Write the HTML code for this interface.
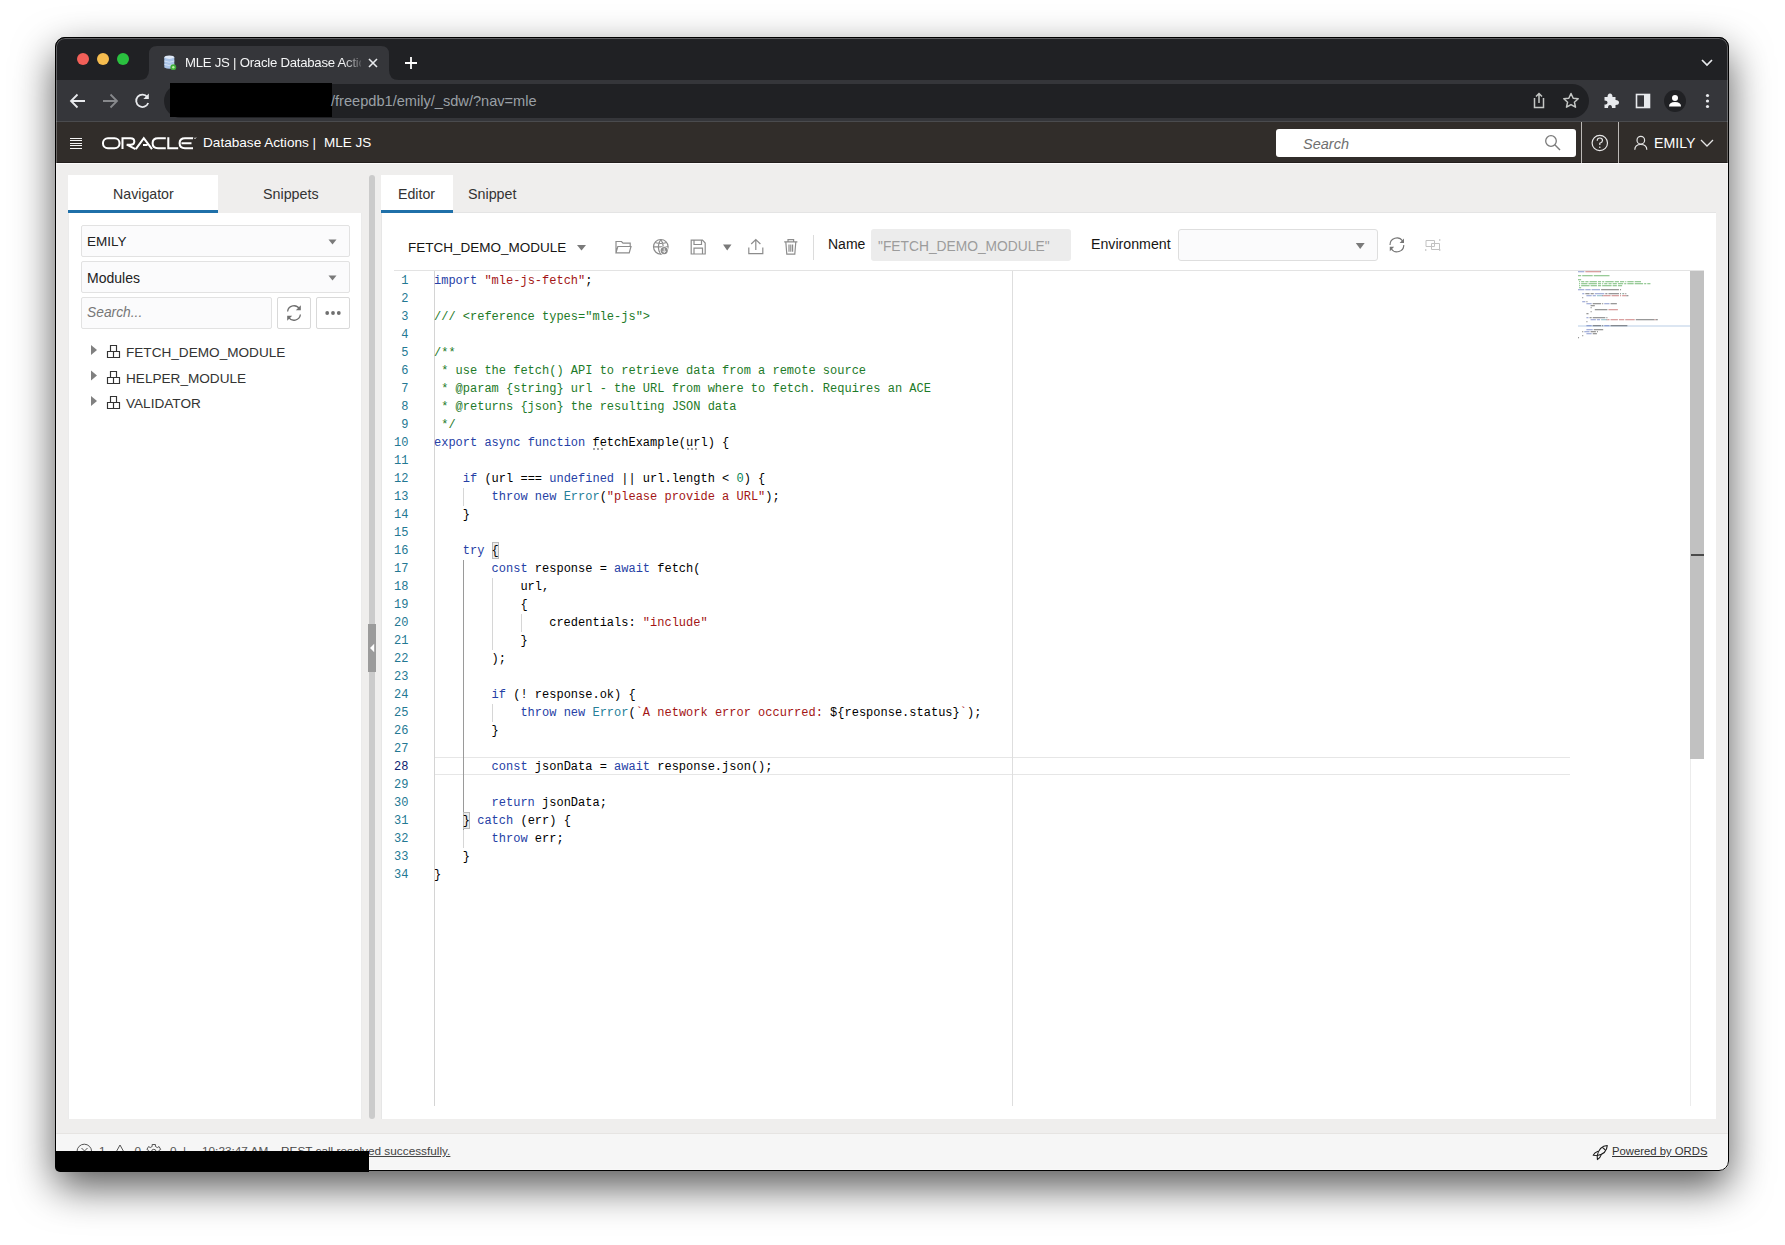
<!DOCTYPE html>
<html><head><meta charset="utf-8">
<style>
*{box-sizing:border-box;margin:0;padding:0}
html,body{width:1785px;height:1245px;overflow:hidden;background:#fff;font-family:"Liberation Sans",sans-serif}
.abs{position:absolute}
#shadow{position:absolute;left:55px;top:37px;width:1674px;height:1134px;border-radius:10px;box-shadow:0 16px 40px rgba(0,0,0,0.66)}
#win{position:absolute;left:55px;top:37px;width:1674px;height:1134px;border-radius:10px;overflow:hidden;background:#efeeed}
#pg{position:absolute;left:-55px;top:-37px;width:1785px;height:1245px}
#winborder{position:absolute;left:55px;top:37px;width:1674px;height:1134px;border-radius:10px;border:1px solid #000;box-shadow:inset 0 0 0 1px rgba(255,255,255,0.28);pointer-events:none}
.code{font-family:"Liberation Mono",monospace;font-size:12px;line-height:18px;white-space:pre;color:#000}
.lnum .act{color:#0b216f}
.k{color:#2540a5}.s{color:#a31515}.c{color:#1d7a28}.t{color:#267f99}.n{color:#098658}
</style></head><body>
<div id="shadow"></div>
<div id="win"><div id="pg">
  <!-- tabstrip -->
  <div class="abs" style="left:55px;top:37px;width:1674px;height:43px;background:#202124"></div>
  <div class="abs" style="left:77px;top:53px;width:12px;height:12px;border-radius:50%;background:#f25f58"></div>
  <div class="abs" style="left:97px;top:53px;width:12px;height:12px;border-radius:50%;background:#f6bd4f"></div>
  <div class="abs" style="left:117px;top:53px;width:12px;height:12px;border-radius:50%;background:#2ac13f"></div>
  <!-- toolbar -->
  <div class="abs" style="left:55px;top:80px;width:1674px;height:42px;background:#35363a"></div>

  <!-- tab -->
  <svg class="abs" style="left:0;top:0" width="1785" height="125">
    <path d="M139 80 Q149 80 149 70 L149 54 Q149 46 157 46 L381 46 Q389 46 389 54 L389 70 Q389 80 399 80 Z" fill="#35363a"/>
    <!-- favicon -->
    <ellipse cx="169.3" cy="57.5" rx="5" ry="2" fill="#dfe9f7"/>
    <path d="M164.3 57.5 L164.3 67.5 Q169.3 70.2 174.3 67.5 L174.3 57.5 Q169.3 60.3 164.3 57.5Z" fill="#aac4e8"/>
    <path d="M164.3 61 Q169.3 63.5 174.3 61 M164.3 64.3 Q169.3 66.8 174.3 64.3" stroke="#dce8f8" stroke-width="0.8" fill="none"/>
    <circle cx="173.3" cy="67.2" r="2.9" fill="#3fae3a"/>
    <circle cx="173.3" cy="67.2" r="1.2" fill="#b8f0a0"/>
    <!-- close x -->
    <path d="M369 59 L377 67 M377 59 L369 67" stroke="#e8eaed" stroke-width="1.6"/>
    <!-- plus -->
    <path d="M405 63 L417 63 M411 57 L411 69" stroke="#fff" stroke-width="1.8"/>
    <!-- tab strip chevron -->
    <path d="M1702 60 L1707 65 L1712 60" stroke="#e8eaed" stroke-width="1.7" fill="none"/>
    <!-- back -->
    <path d="M71 101 L85 101 M77.5 94.5 L71 101 L77.5 107.5" stroke="#e8eaed" stroke-width="1.8" fill="none"/>
    <!-- forward -->
    <path d="M103 101 L117 101 M110.5 94.5 L117 101 L110.5 107.5" stroke="#87898c" stroke-width="1.8" fill="none"/>
    <!-- reload -->
    <path d="M147.3 97 A6.2 6.2 0 1 0 148.2 103" stroke="#e8eaed" stroke-width="1.8" fill="none"/>
    <path d="M148.8 93.5 L148.8 99 L143.3 99 Z" fill="#e8eaed"/>
    <!-- address bar -->
    <rect x="164" y="84" width="1425" height="34" rx="17" fill="#202124"/>
    <rect x="170" y="83" width="162" height="34" fill="#000"/>
    <!-- share -->
    <path d="M1534.5 98 L1534.5 107.5 L1543.5 107.5 L1543.5 98" stroke="#c4c7c5" stroke-width="1.5" fill="none"/>
    <path d="M1539 103 L1539 94 M1536 96.5 L1539 93.5 L1542 96.5" stroke="#c4c7c5" stroke-width="1.5" fill="none"/>
    <!-- star -->
    <path d="M1571 93.5 L1573.2 98.3 L1578.2 98.8 L1574.4 102.2 L1575.5 107.2 L1571 104.6 L1566.5 107.2 L1567.6 102.2 L1563.8 98.8 L1568.8 98.3 Z" stroke="#c4c7c5" stroke-width="1.5" fill="none" stroke-linejoin="round"/>
    <!-- puzzle -->
    <path d="M1604.5 97 L1607.5 97 Q1607.5 93.5 1610 93.5 Q1612.5 93.5 1612.5 97 L1615.5 97 L1615.5 100 Q1619 100 1619 102.5 Q1619 105 1615.5 105 L1615.5 108 L1612 108 Q1612 105 1610 105 Q1608 105 1608 108 L1604.5 108 L1604.5 104.5 Q1607.5 104.5 1607.5 102.5 Q1607.5 100.5 1604.5 100.5 Z" fill="#e8eaed"/>
    <!-- sidebar -->
    <rect x="1636.5" y="94.5" width="13" height="13" fill="none" stroke="#e8eaed" stroke-width="1.6"/>
    <rect x="1644" y="94" width="6" height="14" fill="#e8eaed"/>
    <!-- avatar -->
    <circle cx="1675" cy="101" r="11" fill="#202124"/>
    <circle cx="1675" cy="98" r="3" fill="#fff"/>
    <path d="M1669 106.5 Q1669 102 1675 102 Q1681 102 1681 106.5 Z" fill="#fff"/>
    <!-- kebab -->
    <circle cx="1707.5" cy="95.5" r="1.6" fill="#e8eaed"/>
    <circle cx="1707.5" cy="101" r="1.6" fill="#e8eaed"/>
    <circle cx="1707.5" cy="106.5" r="1.6" fill="#e8eaed"/>
  </svg>
  <div class="abs" style="left:185px;top:54px;width:176px;height:18px;overflow:hidden;white-space:nowrap;font-size:13.2px;letter-spacing:-0.25px;color:#f4f5f6;line-height:18px;-webkit-mask-image:linear-gradient(to right,#000 158px,transparent 180px)">MLE JS | Oracle Database Actions</div>
  <div class="abs" style="left:331px;top:92px;font-size:14.6px;color:#9aa0a6;line-height:18px;white-space:nowrap">/freepdb1/emily/_sdw/?nav=mle</div>
  <!-- header -->
  <div class="abs" style="left:55px;top:122px;width:1674px;height:41px;background:#312d2a"></div>

  <div class="abs" style="left:55px;top:121px;width:1674px;height:1px;background:#4a4b4e"></div>
  <div class="abs" style="left:55px;top:162px;width:1674px;height:1px;background:#221e1c"></div>
  <div class="abs" style="left:55px;top:163px;width:1674px;height:1px;background:#fbfafa"></div>
  <svg class="abs" style="left:0;top:0" width="1785" height="170">
    <path d="M70 138.5 H82 M70 140.5 H82 M70 143.5 H82 M70 145.5 H82 M70 148.5 H82" stroke="#f4f4f4" stroke-width="1"/>
    <g transform="translate(102,137.3)" stroke="#fff" stroke-width="2.05" fill="none">
      <rect x="0.95" y="0.95" width="16.6" height="9.9" rx="4.95"/>
      <path d="M20.5 11.8 V0.95 H28.5 Q32.3 0.95 32.3 4.2 Q32.3 7.4 28.5 7.4 H24.8 L33.5 11.8"/>
      <path d="M33.8 11.8 L41.8 0.95 L50 11.8 M41 7.6 H45.5"/>
      <path d="M63.8 0.95 H56 Q50.6 0.95 50.6 5.9 Q50.6 10.85 56 10.85 H63.8"/>
      <path d="M66.3 0 V10.85 H76.2"/>
      <path d="M91 0.95 H83 Q77.6 0.95 77.6 5.9 Q77.6 10.85 83 10.85 H91 M79.5 5.9 H89.5"/>
    </g>
    <path d="M194 137.5 L195 139 L196.2 137.2" stroke="#ddd" stroke-width="0.7" fill="none"/>
    <path d="M1576 128 h0" />
  </svg>
  <div class="abs" style="left:203px;top:134px;font-size:13.6px;color:#fff;line-height:18px;white-space:nowrap">Database Actions |</div>
  <div class="abs" style="left:324px;top:134px;font-size:13.5px;color:#fff;line-height:18px;white-space:nowrap">MLE JS</div>
  <!-- search -->
  <div class="abs" style="left:1276px;top:129px;width:300px;height:28px;background:#fff;border-radius:3px"></div>
  <div class="abs" style="left:1303px;top:135px;font-size:14.5px;color:#6f6f6f;font-style:italic;line-height:18px">Search</div>
  <div class="abs" style="left:1581px;top:122px;width:1px;height:41px;background:#bcb9b6"></div>
  <div class="abs" style="left:1618px;top:122px;width:1px;height:41px;background:#bcb9b6"></div>
  <svg class="abs" style="left:0;top:0" width="1785" height="170">
    <circle cx="1551" cy="141" r="5.3" stroke="#7a7a7a" stroke-width="1.3" fill="none"/>
    <path d="M1554.8 144.8 L1560 150" stroke="#7a7a7a" stroke-width="1.4"/>
    <circle cx="1599.8" cy="143" r="7.7" stroke="#e6e6e6" stroke-width="1.2" fill="none"/>
    <path d="M1597.2 140.8 Q1597.2 138 1599.8 138 Q1602.5 138 1602.5 140.6 Q1602.5 142.4 1599.8 143.3 V145" stroke="#e6e6e6" stroke-width="1.2" fill="none"/>
    <circle cx="1599.8" cy="147.3" r="0.8" fill="#e6e6e6"/>
    <circle cx="1640.8" cy="140.2" r="3.8" stroke="#e6e6e6" stroke-width="1.2" fill="none"/>
    <path d="M1634.8 149.8 Q1634.8 144.5 1640.8 144.5 Q1646.8 144.5 1646.8 149.8" stroke="#e6e6e6" stroke-width="1.2" fill="none"/>
    <path d="M1701 140 L1707 146 L1713 140" stroke="#e6e6e6" stroke-width="1.3" fill="none"/>
  </svg>
  <div class="abs" style="left:1654px;top:134px;font-size:14.2px;color:#fff;line-height:18px">EMILY</div>

  <!-- LEFT PANEL -->
  <div class="abs" style="left:68px;top:175px;width:150px;height:38px;background:#fff"></div>
  <div class="abs" style="left:68px;top:210px;width:150px;height:3px;background:#1f70a9"></div>
  <div class="abs" style="left:113px;top:185px;font-size:14.2px;color:#333;line-height:18px">Navigator</div>
  <div class="abs" style="left:263px;top:185px;font-size:14.3px;color:#333;line-height:18px">Snippets</div>
  <div class="abs" style="left:68px;top:213px;width:294px;height:906px;background:#fff;border-left:1px solid #ebebeb;border-right:1px solid #ebebeb"></div>
  <div class="abs" style="left:81px;top:225px;width:269px;height:32px;background:#fbfbfc;border:1px solid #e2e2e2;border-radius:2px"></div>
  <div class="abs" style="left:87px;top:233px;font-size:13.5px;color:#222;line-height:18px">EMILY</div>
  <div class="abs" style="left:81px;top:261px;width:269px;height:32px;background:#fbfbfc;border:1px solid #e2e2e2;border-radius:2px"></div>
  <div class="abs" style="left:87px;top:269px;font-size:14px;color:#222;line-height:18px">Modules</div>
  <div class="abs" style="left:81px;top:297px;width:191px;height:32px;background:#fbfbfc;border:1px solid #e2e2e2;border-radius:2px"></div>
  <div class="abs" style="left:87px;top:304px;font-size:13.8px;color:#777;font-style:italic;line-height:18px">Search...</div>
  <div class="abs" style="left:277px;top:297px;width:34px;height:32px;background:#fff;border:1px solid #d9d9d9;border-radius:2px"></div>
  <div class="abs" style="left:316px;top:297px;width:34px;height:32px;background:#fff;border:1px solid #d9d9d9;border-radius:2px"></div>
  <svg class="abs" style="left:0;top:0" width="1785" height="420">
    <path d="M328.5 239.5 L336.5 239.5 L332.5 244.5 Z" fill="#7a7a7a"/>
    <path d="M328.5 275.5 L336.5 275.5 L332.5 280.5 Z" fill="#7a7a7a"/>
    <!-- refresh -->
    <path d="M287.6 311.5 A6.4 6.4 0 0 1 299.5 309" stroke="#707070" stroke-width="1.3" fill="none"/>
    <path d="M300.4 314.5 A6.4 6.4 0 0 1 288.5 317" stroke="#707070" stroke-width="1.3" fill="none"/>
    <path d="M300.8 305.2 L300.8 310.2 L295.8 310.2 Z" fill="#707070"/>
    <path d="M287.2 320.8 L287.2 315.8 L292.2 315.8 Z" fill="#707070"/>
    <circle cx="327.2" cy="313" r="1.9" fill="#6f6f6f"/>
    <circle cx="333" cy="313" r="1.9" fill="#6f6f6f"/>
    <circle cx="338.8" cy="313" r="1.9" fill="#6f6f6f"/>
    <!-- tree -->
    <g fill="#808080">
      <path d="M91 345 L97 350 L91 355 Z"/>
      <path d="M91 370.5 L97 375.5 L91 380.5 Z"/>
      <path d="M91 396 L97 401 L91 406 Z"/>
    </g>
    <g stroke="#333" stroke-width="1.15" fill="none">
      <path d="M110.5 351.5 V345.5 H116.5 V351.5 M107.5 351.5 H119.5 V357.5 H107.5 Z M113.5 351.5 V357.5"/>
      <path d="M110.5 377.5 V371.5 H116.5 V377.5 M107.5 377.5 H119.5 V383.5 H107.5 Z M113.5 377.5 V383.5"/>
      <path d="M110.5 402.5 V396.5 H116.5 V402.5 M107.5 402.5 H119.5 V408.5 H107.5 Z M113.5 402.5 V408.5"/>
    </g>
  </svg>
  <div class="abs" style="left:126px;top:344px;font-size:13.6px;color:#333;line-height:18px">FETCH_DEMO_MODULE</div>
  <div class="abs" style="left:126px;top:369.5px;font-size:13.6px;color:#333;line-height:18px">HELPER_MODULE</div>
  <div class="abs" style="left:126px;top:395px;font-size:13.6px;color:#333;line-height:18px">VALIDATOR</div>
  <!-- splitter -->
  <div class="abs" style="left:369px;top:175px;width:6px;height:944px;background:#cbcbcb;border-radius:3px"></div>
  <div class="abs" style="left:368px;top:624px;width:8px;height:48px;background:#9b9b9b"></div>
  <svg class="abs" style="left:0;top:0" width="400" height="700"><path d="M370 648 L374.2 643.8 L374.2 652.2 Z" fill="#fff"/></svg>
  <!-- RIGHT PANEL -->
  <div class="abs" style="left:381px;top:175px;width:72px;height:38px;background:#fff"></div>
  <div class="abs" style="left:381px;top:210px;width:72px;height:3px;background:#1f70a9"></div>
  <div class="abs" style="left:398px;top:185px;font-size:14.2px;color:#333;line-height:18px">Editor</div>
  <div class="abs" style="left:468px;top:185px;font-size:14.3px;color:#333;line-height:18px">Snippet</div>
  <div class="abs" style="left:453px;top:212px;width:1263px;height:1px;background:#e4e4e4"></div>
  <div class="abs" style="left:381px;top:213px;width:1335px;height:906px;background:#fff;border-left:1px solid #e6e6e6"></div>
  <div class="abs" style="left:408px;top:239px;font-size:13.5px;color:#161513;line-height:18px">FETCH_DEMO_MODULE</div>
  <div class="abs" style="left:828px;top:235px;font-size:14px;color:#161513;line-height:18px">Name</div>
  <div class="abs" style="left:871px;top:229px;width:200px;height:32px;background:#ececec;border-radius:3px"></div>
  <div class="abs" style="left:878px;top:237.5px;font-size:13.8px;color:#9c9c9c;line-height:18px">"FETCH_DEMO_MODULE"</div>
  <div class="abs" style="left:1091px;top:235px;font-size:14.2px;color:#161513;line-height:18px">Environment</div>
  <div class="abs" style="left:1178px;top:229px;width:200px;height:32px;background:#fbfbfc;border:1px solid #dedede;border-radius:3px"></div>
  <div class="abs" style="left:813px;top:235px;width:1px;height:25px;background:#dcdcdc"></div>
  <svg class="abs" style="left:0;top:0" width="1785" height="270">
    <path d="M577 245 L586 245 L581.5 250.5 Z" fill="#7a7a7a"/>
    <path d="M723 244.5 L731.5 244.5 L727.2 250.5 Z" fill="#7a7a7a"/>
    <path d="M1355.8 243 L1364.7 243 L1360.2 249 Z" fill="#7a7a7a"/>
    <g stroke="#8c8c8c" stroke-width="1.2" fill="none">
      <!-- folder -->
      <path d="M616 252.8 V241.5 H621.5 L623 243.2 H630.2 V246.5 M616 252.8 L617.8 246.5 H631 L629.2 252.8 Z"/>
      <!-- globe -->
      <circle cx="660.8" cy="246.8" r="7.3"/>
      <path d="M653.5 246.8 H668.1 M660.8 239.5 Q655.8 246.8 660.8 254.1 M660.8 239.5 Q665.8 246.8 660.8 254.1 M655 242.5 Q660.8 244.5 666.6 242.5"/>
      <!-- save -->
      <path d="M691.2 240.2 H702.5 L705.2 243 V254 H691.2 Z M694 240.2 V244.5 H701.5 V240.2 M694 254 V248.2 H702.5 V254"/>
      <!-- upload -->
      <path d="M748.8 247.5 V253.6 H762.8 V247.5 M755.8 250 V239.5 M751.2 244 L755.8 239.5 L760.4 244"/>
      <!-- trash -->
      <path d="M784.2 241.8 H797.4 M788 241.8 V239.6 H793.6 V241.8 M785.8 241.8 L786.8 254.2 H794.8 L795.8 241.8 M789 244.5 V251.8 M790.8 244.5 V251.8 M792.6 244.5 V251.8"/>
      <!-- refresh env -->
      <path d="M1390 244.9 A6.9 6.9 0 0 1 1402.6 241 M1403.8 244.9 A6.9 6.9 0 0 1 1391.2 248.8" stroke="#767676" stroke-width="1.15"/>
    </g>
    <circle cx="664.2" cy="250.6" r="4.4" fill="#fff"/><circle cx="664.2" cy="250.6" r="3.6" fill="#8c8c8c"/>
    <path d="M664.2 248.2 V252.4 M662.4 250.8 L664.2 252.6 L666 250.8" stroke="#fff" stroke-width="0.9" fill="none"/>
    <path d="M1404 238.6 V243 H1399.6 Z M1389.8 251.2 V246.8 H1394.2 Z" fill="#767676"/>
    <g stroke="#c2c2c2" stroke-width="1" fill="none">
      <path d="M1426 240.5 H1434.5 V246.5 H1426 Z M1431.5 243.5 H1439.5 V249.5 H1431.5 Z"/>
      <path d="M1439 240 h1.4 M1425 250 h1.4 M1439 250 h1.4" stroke-width="1.4"/>
    </g>
  </svg>

  <!-- EDITOR -->
  <div class="abs" style="left:394px;top:270px;width:1310px;height:1px;background:#e3e3e3"></div>
  <div class="abs" style="left:434px;top:757px;width:1136px;height:18px;border-top:1px solid #e6e6e6;border-bottom:1px solid #e6e6e6"></div>
  <div class="abs" style="left:434px;top:271px;width:1px;height:835px;background:#d4d4d4"></div>
  <div class="abs" style="left:1012px;top:271px;width:1px;height:835px;background:#dedede"></div>
  <!-- indent guides -->
  <div class="abs" style="left:463px;top:488px;width:1px;height:18px;background:#d6d6d6"></div>
  <div class="abs" style="left:463px;top:560px;width:1px;height:288px;background:#9a9a9a"></div>
  <div class="abs" style="left:492px;top:578px;width:1px;height:72px;background:#d6d6d6"></div>
  <div class="abs" style="left:521px;top:614px;width:1px;height:18px;background:#d6d6d6"></div>
  <div class="abs" style="left:492px;top:704px;width:1px;height:18px;background:#d6d6d6"></div>
  <div class="abs" style="left:463px;top:830px;width:1px;height:18px;background:#d6d6d6"></div>
  <!-- bracket match -->
  <div class="abs" style="left:492px;top:542px;width:7px;height:17px;background:#ececec;border:1px solid #b9b9b9"></div>
  <div class="abs" style="left:463px;top:812px;width:7px;height:17px;background:#ececec;border:1px solid #b9b9b9"></div>
  <div class="abs code lnum" style="left:380.5px;top:272px;width:28px;text-align:right;color:#237893"><div>1</div><div>2</div><div>3</div><div>4</div><div>5</div><div>6</div><div>7</div><div>8</div><div>9</div><div>10</div><div>11</div><div>12</div><div>13</div><div>14</div><div>15</div><div>16</div><div>17</div><div>18</div><div>19</div><div>20</div><div>21</div><div>22</div><div>23</div><div>24</div><div>25</div><div>26</div><div>27</div><div class=act>28</div><div>29</div><div>30</div><div>31</div><div>32</div><div>33</div><div>34</div></div>
  <div class="abs code" style="left:434px;top:272px"><div><span class="k">import</span> <span class="s">"mle-js-fetch"</span>;</div><div>&#8203;</div><div><span class="c">/// &lt;reference types="mle-js"&gt;</span></div><div>&#8203;</div><div><span class="c">/**</span></div><div><span class="c"> * use the fetch() API to retrieve data from a remote source</span></div><div><span class="c"> * @param {string} url - the URL from where to fetch. Requires an ACE</span></div><div><span class="c"> * @returns {json} the resulting JSON data</span></div><div><span class="c"> */</span></div><div><span class="k">export</span> <span class="k">async</span> <span class="k">function</span> fetchExample(url) {</div><div>&#8203;</div><div>    <span class="k">if</span> (url === <span class="k">undefined</span> || url.length &lt; <span class="n">0</span>) {</div><div>        <span class="k">throw</span> <span class="k">new</span> <span class="t">Error</span>(<span class="s">"please provide a URL"</span>);</div><div>    }</div><div>&#8203;</div><div>    <span class="k">try</span> {</div><div>        <span class="k">const</span> response = <span class="k">await</span> fetch(</div><div>            url,</div><div>            {</div><div>                credentials: <span class="s">"include"</span></div><div>            }</div><div>        );</div><div>&#8203;</div><div>        <span class="k">if</span> (! response.ok) {</div><div>            <span class="k">throw</span> <span class="k">new</span> <span class="t">Error</span>(<span class="s">`A network error occurred: </span>${response.status}<span class="s">`</span>);</div><div>        }</div><div>&#8203;</div><div>        <span class="k">const</span> jsonData = <span class="k">await</span> response.json();</div><div>&#8203;</div><div>        <span class="k">return</span> jsonData;</div><div>    } <span class="k">catch</span> (err) {</div><div>        <span class="k">throw</span> err;</div><div>    }</div><div>}</div></div>
  <!-- hint dots -->
  <svg class="abs" style="left:0;top:0" width="1785" height="460">
    <path d="M593.2 449 h1.6 M597.2 449 h1.6 M601.2 449 h1.6 M687.2 449 h1.6 M691.2 449 h1.6 M695.2 449 h1.6" stroke="#666" stroke-width="1.5"/>
  </svg>
  <!-- scrollbar -->
  <div class="abs" style="left:1690px;top:271px;width:1px;height:835px;background:#ececec"></div>
  <div class="abs" style="left:1690px;top:271px;width:14px;height:488px;background:#c1c1c1"></div>
  <div class="abs" style="left:1691px;top:554px;width:13px;height:2px;background:#4b4b4b"></div>

  <!-- minimap -->
<svg class="abs" style="left:0;top:0" width="1785" height="360">
<rect x="1578" y="325" width="112" height="2" fill="#dce6f2"/>
<g opacity="0.4"><rect x="1578.00" y="271" width="6.30" height="1.3" fill="#2540a5"/><rect x="1585.35" y="271" width="14.70" height="1.3" fill="#a31515"/><rect x="1600.05" y="271" width="1.05" height="1.3" fill="#000000"/><rect x="1578.00" y="275" width="3.15" height="1.3" fill="#008000"/><rect x="1582.20" y="275" width="10.50" height="1.3" fill="#008000"/><rect x="1593.75" y="275" width="15.75" height="1.3" fill="#008000"/><rect x="1578.00" y="279" width="3.15" height="1.3" fill="#008000"/><rect x="1579.05" y="281" width="1.05" height="1.3" fill="#008000"/><rect x="1581.15" y="281" width="3.15" height="1.3" fill="#008000"/><rect x="1585.35" y="281" width="3.15" height="1.3" fill="#008000"/><rect x="1589.55" y="281" width="7.35" height="1.3" fill="#008000"/><rect x="1597.95" y="281" width="3.15" height="1.3" fill="#008000"/><rect x="1602.15" y="281" width="2.10" height="1.3" fill="#008000"/><rect x="1605.30" y="281" width="8.40" height="1.3" fill="#008000"/><rect x="1614.75" y="281" width="4.20" height="1.3" fill="#008000"/><rect x="1620.00" y="281" width="4.20" height="1.3" fill="#008000"/><rect x="1625.25" y="281" width="1.05" height="1.3" fill="#008000"/><rect x="1627.35" y="281" width="6.30" height="1.3" fill="#008000"/><rect x="1634.70" y="281" width="6.30" height="1.3" fill="#008000"/><rect x="1579.05" y="283" width="1.05" height="1.3" fill="#008000"/><rect x="1581.15" y="283" width="6.30" height="1.3" fill="#008000"/><rect x="1588.50" y="283" width="8.40" height="1.3" fill="#008000"/><rect x="1597.95" y="283" width="3.15" height="1.3" fill="#008000"/><rect x="1602.15" y="283" width="1.05" height="1.3" fill="#008000"/><rect x="1604.25" y="283" width="3.15" height="1.3" fill="#008000"/><rect x="1608.45" y="283" width="3.15" height="1.3" fill="#008000"/><rect x="1612.65" y="283" width="4.20" height="1.3" fill="#008000"/><rect x="1617.90" y="283" width="5.25" height="1.3" fill="#008000"/><rect x="1624.20" y="283" width="2.10" height="1.3" fill="#008000"/><rect x="1627.35" y="283" width="6.30" height="1.3" fill="#008000"/><rect x="1634.70" y="283" width="8.40" height="1.3" fill="#008000"/><rect x="1644.15" y="283" width="2.10" height="1.3" fill="#008000"/><rect x="1647.30" y="283" width="3.15" height="1.3" fill="#008000"/><rect x="1579.05" y="285" width="1.05" height="1.3" fill="#008000"/><rect x="1581.15" y="285" width="8.40" height="1.3" fill="#008000"/><rect x="1590.60" y="285" width="6.30" height="1.3" fill="#008000"/><rect x="1597.95" y="285" width="3.15" height="1.3" fill="#008000"/><rect x="1602.15" y="285" width="9.45" height="1.3" fill="#008000"/><rect x="1612.65" y="285" width="4.20" height="1.3" fill="#008000"/><rect x="1617.90" y="285" width="4.20" height="1.3" fill="#008000"/><rect x="1579.05" y="287" width="2.10" height="1.3" fill="#008000"/><rect x="1578.00" y="289" width="6.30" height="1.3" fill="#2540a5"/><rect x="1585.35" y="289" width="5.25" height="1.3" fill="#2540a5"/><rect x="1591.65" y="289" width="8.40" height="1.3" fill="#2540a5"/><rect x="1601.10" y="289" width="17.85" height="1.3" fill="#000000"/><rect x="1620.00" y="289" width="1.05" height="1.3" fill="#000000"/><rect x="1582.20" y="293" width="2.10" height="1.3" fill="#2540a5"/><rect x="1585.35" y="293" width="4.20" height="1.3" fill="#000000"/><rect x="1590.60" y="293" width="3.15" height="1.3" fill="#000000"/><rect x="1594.80" y="293" width="9.45" height="1.3" fill="#2540a5"/><rect x="1605.30" y="293" width="2.10" height="1.3" fill="#000000"/><rect x="1608.45" y="293" width="10.50" height="1.3" fill="#000000"/><rect x="1620.00" y="293" width="1.05" height="1.3" fill="#000000"/><rect x="1622.10" y="293" width="1.05" height="1.3" fill="#098658"/><rect x="1623.15" y="293" width="1.05" height="1.3" fill="#000000"/><rect x="1625.25" y="293" width="1.05" height="1.3" fill="#000000"/><rect x="1586.40" y="295" width="5.25" height="1.3" fill="#2540a5"/><rect x="1592.70" y="295" width="3.15" height="1.3" fill="#2540a5"/><rect x="1596.90" y="295" width="5.25" height="1.3" fill="#267f99"/><rect x="1602.15" y="295" width="1.05" height="1.3" fill="#000000"/><rect x="1603.20" y="295" width="7.35" height="1.3" fill="#a31515"/><rect x="1611.60" y="295" width="7.35" height="1.3" fill="#a31515"/><rect x="1620.00" y="295" width="1.05" height="1.3" fill="#a31515"/><rect x="1622.10" y="295" width="4.20" height="1.3" fill="#a31515"/><rect x="1626.30" y="295" width="2.10" height="1.3" fill="#000000"/><rect x="1582.20" y="297" width="1.05" height="1.3" fill="#000000"/><rect x="1582.20" y="301" width="3.15" height="1.3" fill="#2540a5"/><rect x="1586.40" y="301" width="1.05" height="1.3" fill="#000000"/><rect x="1586.40" y="303" width="5.25" height="1.3" fill="#2540a5"/><rect x="1592.70" y="303" width="8.40" height="1.3" fill="#000000"/><rect x="1602.15" y="303" width="1.05" height="1.3" fill="#000000"/><rect x="1604.25" y="303" width="5.25" height="1.3" fill="#2540a5"/><rect x="1610.55" y="303" width="6.30" height="1.3" fill="#000000"/><rect x="1590.60" y="305" width="4.20" height="1.3" fill="#000000"/><rect x="1590.60" y="307" width="1.05" height="1.3" fill="#000000"/><rect x="1594.80" y="309" width="12.60" height="1.3" fill="#000000"/><rect x="1608.45" y="309" width="9.45" height="1.3" fill="#a31515"/><rect x="1590.60" y="311" width="1.05" height="1.3" fill="#000000"/><rect x="1586.40" y="313" width="2.10" height="1.3" fill="#000000"/><rect x="1586.40" y="317" width="2.10" height="1.3" fill="#2540a5"/><rect x="1589.55" y="317" width="2.10" height="1.3" fill="#000000"/><rect x="1592.70" y="317" width="12.60" height="1.3" fill="#000000"/><rect x="1606.35" y="317" width="1.05" height="1.3" fill="#000000"/><rect x="1590.60" y="319" width="5.25" height="1.3" fill="#2540a5"/><rect x="1596.90" y="319" width="3.15" height="1.3" fill="#2540a5"/><rect x="1601.10" y="319" width="5.25" height="1.3" fill="#267f99"/><rect x="1606.35" y="319" width="1.05" height="1.3" fill="#000000"/><rect x="1607.40" y="319" width="2.10" height="1.3" fill="#a31515"/><rect x="1610.55" y="319" width="7.35" height="1.3" fill="#a31515"/><rect x="1618.95" y="319" width="5.25" height="1.3" fill="#a31515"/><rect x="1625.25" y="319" width="9.45" height="1.3" fill="#a31515"/><rect x="1635.75" y="319" width="18.90" height="1.3" fill="#000000"/><rect x="1654.65" y="319" width="1.05" height="1.3" fill="#a31515"/><rect x="1655.70" y="319" width="2.10" height="1.3" fill="#000000"/><rect x="1586.40" y="321" width="1.05" height="1.3" fill="#000000"/><rect x="1586.40" y="325" width="5.25" height="1.3" fill="#2540a5"/><rect x="1592.70" y="325" width="8.40" height="1.3" fill="#000000"/><rect x="1602.15" y="325" width="1.05" height="1.3" fill="#000000"/><rect x="1604.25" y="325" width="5.25" height="1.3" fill="#2540a5"/><rect x="1610.55" y="325" width="16.80" height="1.3" fill="#000000"/><rect x="1586.40" y="329" width="6.30" height="1.3" fill="#2540a5"/><rect x="1593.75" y="329" width="9.45" height="1.3" fill="#000000"/><rect x="1582.20" y="331" width="1.05" height="1.3" fill="#000000"/><rect x="1584.30" y="331" width="5.25" height="1.3" fill="#2540a5"/><rect x="1590.60" y="331" width="5.25" height="1.3" fill="#000000"/><rect x="1596.90" y="331" width="1.05" height="1.3" fill="#000000"/><rect x="1586.40" y="333" width="5.25" height="1.3" fill="#2540a5"/><rect x="1592.70" y="333" width="4.20" height="1.3" fill="#000000"/><rect x="1582.20" y="335" width="1.05" height="1.3" fill="#000000"/><rect x="1578.00" y="337" width="1.05" height="1.3" fill="#000000"/></g></svg>
  <!-- status -->
  <div class="abs" style="left:55px;top:1133px;width:1674px;height:38px;background:#f6f6f6"></div>
  <div class="abs" style="left:55px;top:1133px;width:1674px;height:1px;background:#e6e4e2"></div>
  <svg class="abs" style="left:0;top:0" width="1785" height="1245">
    <g stroke="#555" stroke-width="1" fill="none">
      <circle cx="84.3" cy="1151.5" r="7.3"/>
      <path d="M81.5 1148 L87.5 1154 M87.5 1148 L81.5 1154"/>
      <path d="M120 1145 L125 1154 L115 1154 Z"/>
      <path d="M152.20 1146.45 L152.12 1144.50 L155.48 1144.50 L155.40 1146.45 L157.38 1147.59 L159.02 1146.54 L160.70 1149.46 L158.98 1150.36 L158.98 1152.64 L160.70 1153.54 L159.02 1156.46 L157.38 1155.41 L155.40 1156.55 L155.48 1158.50 L152.12 1158.50 L152.20 1156.55 L150.22 1155.41 L148.58 1156.46 L146.90 1153.54 L148.62 1152.64 L148.62 1150.36 L146.90 1149.46 L148.58 1146.54 L150.22 1147.59 Z"/><circle cx="153.8" cy="1151.5" r="2.2"/>
    </g>
    <!-- rocket -->
    <g stroke="#1a1a1a" stroke-width="1.05" fill="none" stroke-linejoin="round">
      <path d="M1607.3 1145.4 Q1599.3 1145.8 1597.2 1155.6 Q1606.8 1153.8 1607.3 1145.4 Z"/>
      <path d="M1602.4 1147.4 L1605.4 1150"/>
      <path d="M1598 1151.3 Q1594.5 1152.5 1593.2 1155.3 L1596.9 1155.4"/>
      <path d="M1601.3 1154.6 Q1600.2 1158 1597.4 1159.6 L1597.2 1155.9"/>
    </g>
  </svg>
  <div class="abs" style="left:99px;top:1144px;font-size:11.8px;color:#555;line-height:14px;white-space:pre">1</div>
  <div class="abs" style="left:134.5px;top:1144px;font-size:11.8px;color:#555;line-height:14px;white-space:pre">0</div>
  <div class="abs" style="left:170px;top:1144px;font-size:11.8px;color:#555;line-height:14px;white-space:pre">0</div><div class="abs" style="left:183px;top:1144px;font-size:11.8px;color:#555;line-height:14px;white-space:pre">|</div>
  <div class="abs" style="left:202px;top:1144px;font-size:11.8px;color:#555;line-height:14px;white-space:pre">10:23:47 AM</div>
  <div class="abs" style="left:281px;top:1144px;font-size:11.8px;color:#444;line-height:14px;white-space:pre;text-decoration:underline">REST call resolved successfully.</div>
  <div class="abs" style="left:1612px;top:1144px;font-size:11.3px;color:#333;line-height:14px;white-space:pre;text-decoration:underline">Powered by ORDS</div>

</div></div>
<div id="winborder"></div>
<div class="abs" style="left:55px;top:1151px;width:314px;height:20.5px;background:#000;border-bottom-left-radius:5px"></div>
</body></html>
